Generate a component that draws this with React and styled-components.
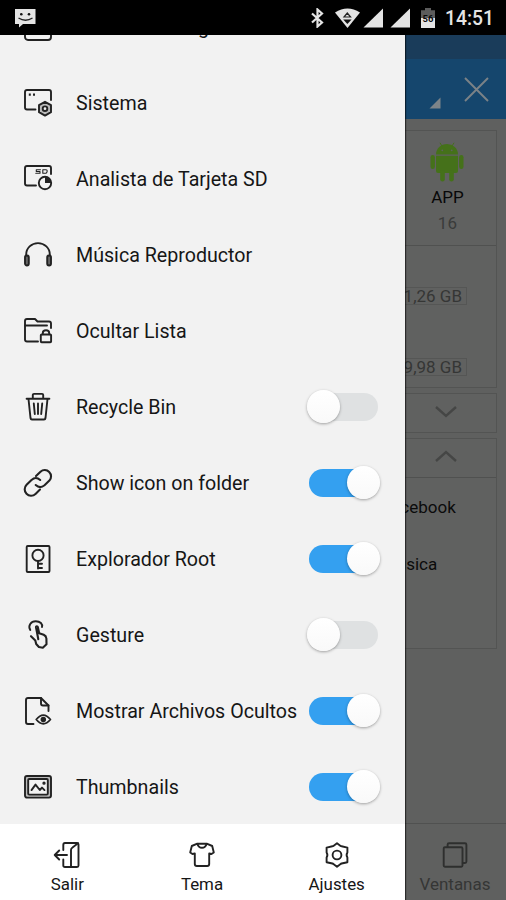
import React from "react";
import styled, { createGlobalStyle, css } from "styled-components";

const GlobalStyle = createGlobalStyle`
  * {
    box-sizing: border-box;
  }

  body {
    margin: 0;
    font-family: Roboto, "Liberation Sans", sans-serif;
    background: #5f605f;
  }
`;

const Screen = styled.div`
  position: relative;
  display: flex;
  flex-direction: column;
  width: 506px;
  height: 900px;
  overflow: hidden;
  background: #5f605f;
`;

// Status bar
const StatusBar = styled.header`
  display: flex;
  align-items: center;
  justify-content: space-between;
  flex: none;
  height: 35px;
  padding: 0 12px 0 15px;
  background: #000;
  color: #e4e4e4;
`;

const StatusIcons = styled.div`
  display: flex;
  align-items: center;
`;

const StatusIcon = styled.svg`
  display: block;
  flex: none;
  margin-right: ${(p) => p.$gap || 0}px;
`;

const Clock = styled.span`
  font-size: 19.3px;
  font-weight: 500;
  line-height: 35px;
  width: 49px;
  white-space: nowrap;
  padding-top: 2px;
`;

// Dimmed page behind the drawer
const Page = styled.main`
  display: flex;
  flex-direction: column;
  flex: 1;
  min-height: 0;
`;

const TabStrip = styled.div`
  flex: none;
  height: 24px;
  background: #1a3c5a;
`;

const Toolbar = styled.div`
  display: flex;
  justify-content: flex-end;
  flex: none;
  height: 60px;
  padding: 18px 17px 0 0;
  gap: 23px;
  background: #15466d;
`;

const ToolbarMark = styled.svg`
  display: block;
  margin-top: 20px;
`;

const PageBody = styled.div`
  display: flex;
  flex-direction: column;
  flex: 1;
  gap: 5px;
  padding: 11px 9px 0;
`;

const Card = styled.section`
  height: ${(p) => p.$height}px;
  border: 1px solid #535453;
  background: #606160;
`;

const TileRow = styled.div`
  display: flex;
  justify-content: flex-end;
  height: 115px;
  border-bottom: 1px solid #505150;
`;

const Tile = styled.div`
  display: flex;
  flex-direction: column;
  align-items: center;
  width: 20%;
  padding-top: 11px;
`;

const TileName = styled.span`
  margin-top: 4px;
  font-size: 17px;
  line-height: 22px;
  color: #080808;
`;

const TileCount = styled.span`
  margin-top: 4px;
  font-size: 17px;
  line-height: 22px;
  color: #3a3b3a;
`;

const StorageRow = styled.div`
  display: flex;
  justify-content: flex-end;
  padding: ${(p) => p.$top}px 29px 0 0;
`;

const StorageSize = styled.span`
  height: 18px;
  padding-right: 4px;
  border: 1px solid #555655;
  font-size: 17px;
  line-height: 17px;
  color: #353635;
`;

const CardHeader = styled.div`
  display: flex;
  justify-content: flex-end;
  align-items: center;
  height: 39px;
  padding: 0 39px ${(p) => (p.$divider ? 4 : 3)}px 0;
  border-bottom: ${(p) => (p.$divider ? "1px solid #505150" : "none")};
`;

const Bookmark = styled.div`
  height: 57px;
  padding-left: 372px;
  font-size: 17px;
  line-height: 59px;
  color: #0b0b0b;
`;

const PageTabs = styled.nav`
  display: flex;
  justify-content: flex-end;
  flex: none;
  height: 77px;
  border-top: 1px solid #505150;
`;

const PageTab = styled.div`
  display: flex;
  flex-direction: column;
  align-items: center;
  gap: 4px;
  width: 102px;
  padding-top: 17px;
  font-size: 17px;
  line-height: 22px;
  color: #353635;
`;

// Drawer
const Drawer = styled.aside`
  position: absolute;
  top: 35px;
  left: 0;
  bottom: 0;
  display: flex;
  flex-direction: column;
  width: 405px;
  background: #f2f2f2;
  box-shadow: 1px 0 1px rgba(0, 0, 0, 0.55);
`;

const MenuList = styled.ul`
  display: flex;
  flex-direction: column;
  justify-content: flex-end;
  flex: 1;
  min-height: 0;
  margin: 0;
  padding: 0;
  overflow: hidden;
  list-style: none;
`;

const MenuItem = styled.li`
  display: flex;
  align-items: center;
  flex: none;
  height: 76px;
  padding: 2px 24px 0;
`;

const MenuLabel = styled.span`
  flex: 1;
  padding: 2px 0 0 24px;
  font-size: 19.65px;
  line-height: 26px;
  white-space: nowrap;
  color: #161616;
`;

const lineIcon = css`
  display: block;
  flex: none;
  overflow: visible;
  fill: none;
  stroke: ${(p) => p.$color || "#222"};
  stroke-width: 1.9;
  stroke-linecap: round;
  stroke-linejoin: round;
`;

const Icon = styled.svg.attrs({ viewBox: "0 0 28 28", width: 28, height: 28 })`
  ${lineIcon}
`;

const Switch = styled.span`
  display: flex;
  align-items: center;
  justify-content: ${(p) => (p.$on ? "flex-end" : "flex-start")};
  flex: none;
  width: 69px;
  height: 28px;
  margin: -1px 3px 0 0;
  border-radius: 14px;
  background: ${(p) => (p.$on ? "#34a0f0" : "#dfe1e2")};
`;

const Thumb = styled.span`
  flex: none;
  width: 33px;
  height: 33px;
  margin: 0 -2px;
  border-radius: 50%;
  background: linear-gradient(#fff, #f9f9f9);
  box-shadow: 0 1px 3px rgba(0, 0, 0, 0.35);
`;

const DrawerFooter = styled.footer`
  display: flex;
  flex: none;
  height: 76px;
  padding-right: 1px;
  background: #fff;
`;

const FooterButton = styled.div`
  display: flex;
  flex-direction: column;
  align-items: center;
  gap: 4px;
  flex: 1;
  padding: 17px 0 0;
  font-size: 16.9px;
  line-height: 22px;
  color: #161616;
`;

const icons = {
  frame: <rect x="1" y="1" width="26" height="26" rx="3" />,
  system: (
    <>
      <path d="M11.5 20.5H3Q1 20.5 1 18.5V3Q1 1 3 1H25Q27 1 27 3V11" />
      <path d="M4.8 5.7H6.8M9 5.7H11" strokeWidth="2.2" strokeLinecap="butt" />
      <path d="M21 12.8l6 3.4v7l-6 3.4-6-3.4v-7z" fill="#bbb" />
      <circle cx="21" cy="19.7" r="2.3" fill="#f2f2f2" />
    </>
  ),
  sd: (
    <>
      <path d="M12 20.5H3Q1 20.5 1 18.5V3Q1 1 3 1H25Q27 1 27 3V9" />
      <path
        d="M16.5 4.7H12.3V6.5H16V8.3H11.8M18.8 8.3V4.7H22Q23.2 4.7 23.2 6T22 8.3H18.8"
        strokeWidth="1.1"
      />
      <circle cx="21" cy="18" r="6.2" />
      <path d="M21 12V18H27A6 6 0 0 0 21 12z" fill="#222" stroke="none" />
    </>
  ),
  headphones: (
    <>
      <path d="M2.2 17V13.5A11.8 11.4 0 0 1 25.8 13.5V17" />
      <rect x="1" y="14.5" width="3.8" height="10" rx="1.9" fill="#666" />
      <rect x="23.2" y="14.5" width="3.8" height="10" rx="1.9" fill="#666" />
    </>
  ),
  folder: (
    <>
      <path d="M14 24.5H3Q1 24.5 1 22.5V4Q1 2 3 2H11L13.5 4.5H25Q27 4.5 27 6.5V11" />
      <path d="M1.5 8.5H23" />
      <rect x="16.8" y="17.5" width="10.3" height="7.7" rx="0.8" />
      <path d="M18.8 17.2V16Q18.8 13.2 22 13.2T25.2 16V17.2" />
    </>
  ),
  trash: (
    <>
      <path d="M2.6 5.8H25.4M8.8 5.5V1.9Q8.8 .9 10 .9H18Q19.2 .9 19.2 1.9V5.5" />
      <path d="M4.5 6L6.5 25Q6.7 26.5 8 26.5H20Q21.3 26.5 21.5 25L23.5 6" />
      <path d="M9.8 10.5L10.8 21M14 10.5V21M18.2 10.5L17.2 21" />
    </>
  ),
  link: (
    <g strokeWidth="2.1">
      <path d="M12 7L16.5 2.7A6.3 6.3 0 0 1 25.4 11.6L20.5 16.2Q16 20 11.7 16" />
      <path d="M16.2 11Q11.8 7 7.5 11L2.6 15.8A6.3 6.3 0 0 0 11.5 24.9L16 20.6" />
    </g>
  ),
  root: (
    <>
      <rect x="2.7" y="1" width="22.8" height="26" rx="1" />
      <circle cx="14" cy="10.4" r="5.6" />
      <path d="M14 16V23.5M14 18.8H18M14 23H18" />
    </>
  ),
  gesture: (
    <>
      <path d="M6.3 9C3.6 4.5 7 .2 11.7 .2S18.8 3 18 6" />
      <path
        d="M14.3 18.2L12 6.2C11.9 5 13.6 5 13.8 6L15.2 12.3L19.7 13.8Q22.2 15 22.4 17.5L22.5 23.3L18.8 26.7L14.9 26L12.2 23L11.3 19.4L7 15.2"
        strokeWidth="2.1"
      />
    </>
  ),
  hiddenFile: (
    <>
      <path d="M9.5 27H4Q2 27 2 25V3Q2 1 4 1H17L24.5 8.5V14" />
      <path d="M17 1V6.5Q17 8.5 19 8.5H24.5" />
      <path d="M12.3 22.5Q19.3 13.8 26.4 22.5Q19.3 31 12.3 22.5z" />
      <circle cx="19.3" cy="22.4" r="1.8" fill="#222" />
    </>
  ),
  thumbs: (
    <>
      <rect x="1" y="3" width="26" height="21.6" rx="2" fill="#bbb" />
      <rect x="4.2" y="6" width="19.6" height="15.6" rx="1" fill="#f2f2f2" />
      <path d="M7.5 17.1L11.5 11.6L15.8 17L18 14.6L20.5 17.1" />
      <circle cx="20" cy="10.2" r=".7" fill="#222" />
    </>
  ),
  exit: (
    <>
      <path d="M10.3 9V4Q10.3 2 12 2H24Q25.5 2 25.5 3.5V24.5Q25.5 26 24 26H12Q10.3 26 10.3 24.5V18.5" />
      <path d="M18 26V9Q18 7.5 19.5 6.5L25 2.3" />
      <path d="M14 14H1.7M6.2 9.5L1.7 14L6.2 18.5" />
    </>
  ),
  shirt: (
    <path d="M9.3 2.7L3.8 5L2.2 11.5L4.5 13L6.8 12.5V23Q6.8 25 8.8 25H19.2Q21.2 25 21.2 23V12.5L23.5 13L25.8 11.5L24.2 5L18.7 2.7H9.3Q10.5 6.8 14 6.8T18.7 2.7" />
  ),
  settings: (
    <>
      <path d="M14 2.3L17.6 5Q18 5.3 18.6 5.3L24.4 6.6V11.5Q22.8 14 24.4 16.5V21.2L18.6 22.5Q18 22.7 17.6 23L14 25.7L10.4 23Q10 22.7 9.4 22.5L3.6 21.2V16.5Q5.2 14 3.6 11.5V6.6L9.4 5.3Q10 5.3 10.4 5z" />
      <circle cx="14" cy="14" r="4.4" />
    </>
  ),
  windows: (
    <>
      <rect x="2.7" y="6.3" width="18.8" height="19.4" rx="1.2" />
      <path d="M6.6 6V3.8Q6.6 2.3 8 2.3H24Q25.4 2.3 25.4 3.8V20.5Q25.4 22 24 22H21.8" />
    </>
  ),
};

const menu = [
  { icon: "frame", label: "Remote Manager" },
  { icon: "system", label: "Sistema" },
  { icon: "sd", label: "Analista de Tarjeta SD" },
  { icon: "headphones", label: "Música Reproductor" },
  { icon: "folder", label: "Ocultar Lista" },
  { icon: "trash", label: "Recycle Bin", on: false },
  { icon: "link", label: "Show icon on folder", on: true },
  { icon: "root", label: "Explorador Root", on: true },
  { icon: "gesture", label: "Gesture", on: false },
  { icon: "hiddenFile", label: "Mostrar Archivos Ocultos", on: true },
  { icon: "thumbs", label: "Thumbnails", on: true },
];

const footer = [
  { icon: "exit", label: "Salir" },
  { icon: "shirt", label: "Tema" },
  { icon: "settings", label: "Ajustes" },
];

const Chevron = ({ up }) => (
  <svg width="22" height="12" viewBox="0 0 22 12" fill="none" stroke="#454645" strokeWidth="2.4">
    <path d={up ? "M1 11L11 2L21 11" : "M1 1L11 10L21 1"} />
  </svg>
);

const Android = () => (
  <svg width="34" height="40" viewBox="0 0 34 40" fill="#45711a">
    <path d="M6 12.5A11 10.5 0 0 1 28 12.5z" />
    <path d="M10 .8L12.5 5M24 .8L21.5 5" stroke="#45711a" strokeWidth="1" />
    <path d="M6 13.8H28V29Q28 31 26 31H8Q6 31 6 29z" />
    <rect x="0.5" y="13" width="4.4" height="14" rx="2.2" />
    <rect x="29.1" y="13" width="4.4" height="14" rx="2.2" />
    <rect x="10.2" y="28" width="4.6" height="11.5" rx="2.3" />
    <rect x="19.2" y="28" width="4.6" height="11.5" rx="2.3" />
    <circle cx="12.3" cy="8.3" r=".9" fill="#606160" />
    <circle cx="21.7" cy="8.3" r=".9" fill="#606160" />
  </svg>
);

const Status = () => (
  <StatusBar>
    <StatusIcon width="21" height="20" viewBox="0 0 21 20">
      <path d="M1 1H20.5V16H8L4 19.5V16H0V1z" fill="#e4e4e4" />
      <path d="M3.5 10Q10.5 14.5 17.5 10" fill="none" stroke="#222" strokeWidth="1.3" />
      <circle cx="6.3" cy="6.3" r="1.3" fill="#111" />
      <circle cx="14" cy="6.3" r="1.3" fill="#111" />
    </StatusIcon>
    <StatusIcons>
      <StatusIcon $gap={11} width="13" height="20" viewBox="0 0 13 20">
        <path d="M1 5.5L11 14.5L6.5 18.5V1.5L11 5.5L1 14.5" fill="none" stroke="#e4e4e4" strokeWidth="2.2" />
      </StatusIcon>
      <StatusIcon $gap={3} width="25" height="20" viewBox="0 0 25 20">
        <path d="M0 4.5Q12.5 -3.5 25 4.5L12.5 20z" fill="#e4e4e4" />
        <path d="M9 9L12.3 5L15.6 9z" fill="none" stroke="#222" strokeWidth="1.2" />
        <path d="M8.2 11.4H16.6L12.4 16z" fill="#111" />
      </StatusIcon>
      <StatusIcon $gap={7} width="20" height="20" viewBox="0 0 20 20">
        <path d="M20 .5V19.5H.5z" fill="#e4e4e4" />
      </StatusIcon>
      <StatusIcon $gap={11} width="20" height="20" viewBox="0 0 20 20">
        <path d="M20 .5V19.5H.5z" fill="#e4e4e4" />
      </StatusIcon>
      <StatusIcon $gap={10} width="14" height="20" viewBox="0 0 14 20">
        <path d="M0 2.3H4V0H10V2.3H14V11H0z" fill="#5c5c5c" />
        <path d="M0 10H14V20H0z" fill="#e4e4e4" />
        <text x="7" y="14" textAnchor="middle" fontFamily="Roboto, sans-serif" fontSize="9.5" fontWeight="700" fill="#0a0a0a">
          56
        </text>
      </StatusIcon>
      <Clock>14:51</Clock>
    </StatusIcons>
  </StatusBar>
);

export default function App() {
  return (
    <Screen>
      <GlobalStyle />
      <Status />

      <Page>
        <TabStrip />
        <Toolbar>
          <ToolbarMark width="12" height="12" viewBox="0 0 12 12">
            <path d="M11.5 .5V11.5H.5z" fill="#7d8489" />
          </ToolbarMark>
          <svg width="25" height="25" viewBox="0 0 25 25" stroke="#7b8287" strokeWidth="1.9">
            <path d="M1 1L24 24M24 1L1 24" />
          </svg>
        </Toolbar>
        <PageBody>
          <Card $height={258}>
            <TileRow>
              <Tile>
                <Android />
                <TileName>APP</TileName>
                <TileCount>16</TileCount>
              </Tile>
            </TileRow>
            <StorageRow $top={41}>
              <StorageSize>1,26 GB</StorageSize>
            </StorageRow>
            <StorageRow $top={53}>
              <StorageSize>9,98 GB</StorageSize>
            </StorageRow>
          </Card>
          <Card $height={40}>
            <CardHeader>
              <Chevron />
            </CardHeader>
          </Card>
          <Card $height={211}>
            <CardHeader $divider>
              <Chevron up />
            </CardHeader>
            <Bookmark>Facebook</Bookmark>
            <Bookmark>Música</Bookmark>
          </Card>
        </PageBody>
        <PageTabs>
          <PageTab>
            <Icon $color="#2e2f2e">{icons.windows}</Icon>
            Ventanas
          </PageTab>
        </PageTabs>
      </Page>

      <Drawer>
        <MenuList>
          {menu.map((item) => (
            <MenuItem key={item.label}>
              <Icon>{icons[item.icon]}</Icon>
              <MenuLabel>{item.label}</MenuLabel>
              {item.on !== undefined && (
                <Switch $on={item.on}>
                  <Thumb />
                </Switch>
              )}
            </MenuItem>
          ))}
        </MenuList>
        <DrawerFooter>
          {footer.map((item) => (
            <FooterButton key={item.label}>
              <Icon>{icons[item.icon]}</Icon>
              {item.label}
            </FooterButton>
          ))}
        </DrawerFooter>
      </Drawer>
    </Screen>
  );
}
